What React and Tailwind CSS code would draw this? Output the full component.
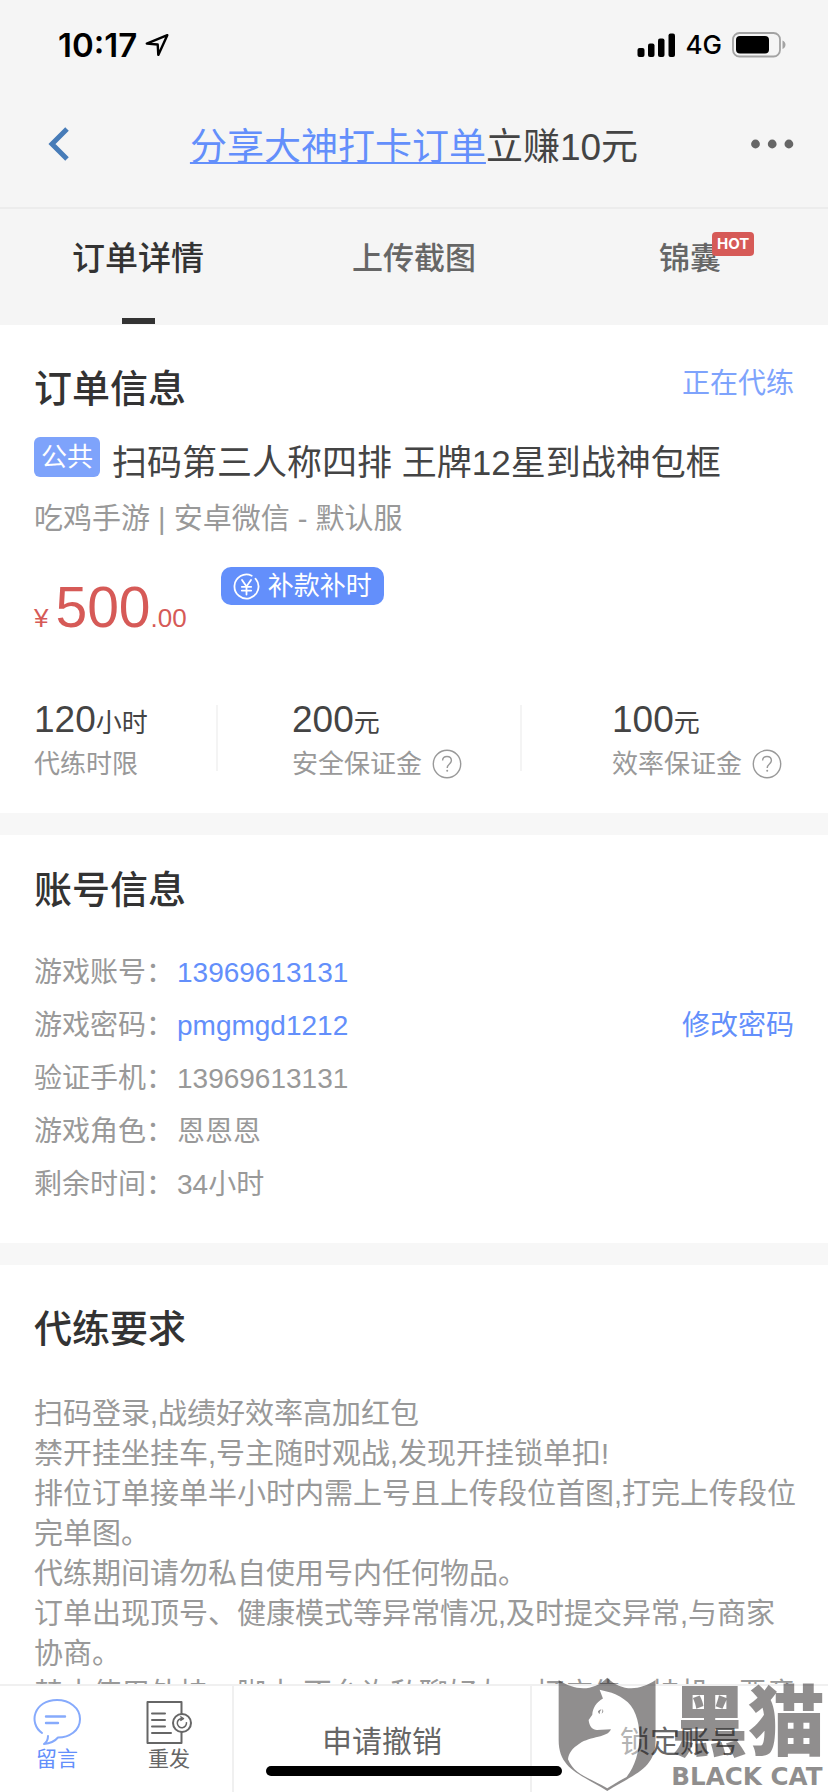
import React from "react";

const stats = [
  { value: "120", unit: "小时", label: "代练时限", help: false },
  { value: "200", unit: "元", label: "安全保证金", help: true },
  { value: "100", unit: "元", label: "效率保证金", help: true },
];

const account = [
  { label: "游戏账号：", value: "13969613131", accent: true },
  { label: "游戏密码：", value: "pmgmgd1212", accent: true, action: "修改密码" },
  { label: "验证手机：", value: "13969613131" },
  { label: "游戏角色：", value: "恩恩恩" },
  { label: "剩余时间：", value: "34小时" },
];

const rules = [
  "扫码登录,战绩好效率高加红包",
  "禁开挂坐挂车,号主随时观战,发现开挂锁单扣!",
  "排位订单接单半小时内需上号且上传段位首图,打完上传段位完单图。",
  "代练期间请勿私自使用号内任何物品。",
  "订单出现顶号、健康模式等异常情况,及时提交异常,与商家协商。",
  "禁止使用外挂、脚本,不允许私聊好友、打广告、挂机、恶意",
];

function StatusBar() {
  return (
    <div className="flex h-[90px] items-center justify-between pl-[58px] pr-[42px] text-black">
      <div className="flex items-center gap-2">
        <span className="font-['Inter',sans-serif] text-[33px] font-semibold leading-10">10:17</span>
        <svg className="h-6 w-6" viewBox="0 0 24 24" fill="none" stroke="currentColor" strokeWidth="2.4" strokeLinejoin="round">
          <path d="M22.3 2.2 1.8 10.6l10.9.9.6 10.4z" />
        </svg>
      </div>
      <div className="flex items-center gap-[10px]">
        <svg className="h-6 w-[39px]" viewBox="0 0 39 24">
          <rect x="0.5" y="15" width="7" height="9" rx="2" />
          <rect x="11" y="10.5" width="6.5" height="13.5" rx="2" />
          <rect x="21" y="5.5" width="6.5" height="18.5" rx="2" />
          <rect x="31.5" y="0.5" width="6.5" height="23.5" rx="2" />
        </svg>
        <span className="font-['Inter',sans-serif] text-[26px] font-medium leading-10">4G</span>
        <svg className="h-[26px] w-[54px]" viewBox="0 0 54 26">
          <rect x="1" y="1" width="47" height="23.5" rx="6.5" fill="none" stroke="#a3a3a3" strokeWidth="1.8" />
          <rect x="4" y="4" width="33" height="17.5" rx="4" />
          <path d="M50.5 8.5c4 1.6 4 7 0 8.5z" fill="#a3a3a3" />
        </svg>
      </div>
    </div>
  );
}

function HelpIcon() {
  return (
    <svg className="h-[30px] w-[30px]" viewBox="0 0 30 30" fill="none" stroke="#999" strokeWidth="1.4">
      <circle cx="15" cy="15" r="13.7" />
      <path d="M10.6 11.6c0-5.4 8.8-5.4 8.8 0 0 3.4-4.2 3.4-4.2 7.4" />
      <circle cx="15.2" cy="21.8" r="1" fill="#999" stroke="none" />
    </svg>
  );
}

function Watermark() {
  return (
    <svg className="pointer-events-none absolute bottom-0 right-0 h-[117px] w-[272px]" viewBox="80 105 817 351" aria-hidden="true">
      <g opacity="0.5">
        <path
          fill="#231f20"
          d="M88 120C138 153 192 155 234 113C276 155 330 153 379 120V300C379 385 320 400 234 453C148 400 88 385 88 300Z"
        />
        <path
          fill="#fff"
          d="M116 358C135 405 180 413 234 445C262 428 275 420 292 411C345 345 344 215 285 178C270 166 250 158 235 155L211 149L221 175C201 186 190 204 189 224L178 240C180 260 190 270 203 270L245 268C235 294 185 288 150 311C130 324 118 338 116 358Z"
        />
        <path fill="#231f20" d="M206 214q7-8 11-5-7 4-5 13-6-2-6-8zM219 207q7 8-2 14 4-6 2-14z" />
        <text x="426" y="331" fontSize="231" fontWeight="900" fill="#231f20" fontFamily="'Noto Sans CJK SC', sans-serif">黑猫</text>
        <text x="426" y="434" fontSize="74" fontWeight="700" fill="#231f20" fontFamily="'DejaVu Sans', sans-serif">BLACK CAT</text>
      </g>
    </svg>
  );
}

export default function App() {
  return (
    <div className="flex h-screen flex-col bg-white font-['Liberation_Sans','Noto_Sans_CJK_SC',sans-serif] text-[#444]">
      <header className="shrink-0 bg-[#f5f5f5]">
        <StatusBar />
        <div className="flex h-[119px] items-center justify-between border-b-2 border-[#ececec] px-[34px] pb-[2px]">
          <button type="button" aria-label="返回" className="flex h-12 w-11 items-center justify-center pb-2">
            <svg className="h-9 w-7" viewBox="0 0 28 36" fill="none" stroke="#477cb8" strokeWidth="5">
              <path d="M25 3 10 18l15 15" />
            </svg>
          </button>
          <h1 className="text-[37px] leading-[50px]">
            <a href="#share" className="text-[#638ffb] underline decoration-2 underline-offset-[2px]">分享大神打卡订单</a>立赚10元
          </h1>
          <button type="button" aria-label="更多" className="flex h-12 w-11 items-center justify-end pb-2">
            <svg className="h-3 w-11" viewBox="0 0 44 12" fill="#666">
              <circle cx="5.5" cy="6" r="4.4" />
              <circle cx="22.2" cy="6" r="4.4" />
              <circle cx="38.9" cy="6" r="4.4" />
            </svg>
          </button>
        </div>
        <nav className="grid h-[116px] grid-cols-3 text-[31px] font-medium leading-10 text-[#666]">
          <button type="button" className="flex flex-col items-center justify-between pt-[30px]">
            <span className="text-[33px] text-[#333]">订单详情</span>
            <span className="mb-px h-[6px] w-[33px] bg-[#333]" />
          </button>
          <button type="button" className="flex justify-center pt-[30px]">上传截图</button>
          <button type="button" className="flex justify-center pt-[30px]">
            <span className="relative">
              锦囊
              <span className="absolute -top-[7px] left-[53px] rounded-[4px] bg-[#d65a57] px-[5px] font-['Inter',sans-serif] text-[15px] font-bold leading-6 text-white">HOT</span>
            </span>
          </button>
        </nav>
      </header>

      <main className="min-h-0 flex-1 overflow-y-auto [scrollbar-width:none]">
        <section className="px-[34px] pb-[42px] pt-[39px]">
          <div className="flex justify-between">
            <h2 className="text-[38px] font-medium leading-[50px] text-[#333]">订单信息</h2>
            <span className="text-[28px] leading-10 text-[#7ea3fc]">正在代练</span>
          </div>
          <div className="mt-[23px] flex gap-3">
            <span className="h-10 rounded-[6px] bg-[#7ea3fb] px-[7px] text-[26px] leading-10 text-white">公共</span>
            <p className="text-[35px] leading-[52px]">扫码第三人称四排 王牌12星到战神包框</p>
          </div>
          <p className="mt-[10px] text-[29px] leading-10 text-[#999]">吃鸡手游 | 安卓微信 - 默认服</p>
          <div className="mt-[28px] flex items-start">
            <p className="flex items-baseline pt-[10px] leading-[60px] text-[#d65a57]">
              <span className="text-[26px]">¥</span>
              <span className="ml-[7px] text-[57px]">500</span>
              <span className="text-[26px]">.00</span>
            </p>
            <button type="button" className="ml-[34px] flex h-[38px] items-center gap-2 rounded-[10px] bg-[#638ffb] px-3 text-[26px] leading-[38px] text-white">
              <svg className="h-[27px] w-[27px]" viewBox="0 0 27 27" fill="none" stroke="currentColor" strokeWidth="1.8" strokeLinecap="round">
                <path d="M18.7 2.7A12 12 0 1 0 23 6.2M22.5 5.8 23.8 7.5" />
                <path d="m9 7 4.5 6.5L18 7M8.8 13.8h9.4M8.8 17.6h9.4M13.5 13.5v8" />
              </svg>
              补款补时
            </button>
          </div>
          <dl className="mt-[57px] grid grid-cols-[184fr_304fr_272fr]">
            {stats.map((s, i) => (
              <div
                key={s.label}
                className={
                  i === 0
                    ? "flex h-[66px] flex-col border-r-2 border-[#f4f4f4]"
                    : i === 1
                      ? "flex h-[66px] flex-col border-r-2 border-[#f4f4f4] pl-[74px]"
                      : "flex h-[66px] flex-col pl-[90px]"
                }
              >
                <dt className="order-2 mt-[14px] flex h-[30px] shrink-0 items-center gap-[10px] whitespace-nowrap text-[26px] leading-[30px] text-[#999]">
                  {s.label}
                  {s.help && (
                    <button type="button" aria-label={s.label + "说明"}>
                      <HelpIcon />
                    </button>
                  )}
                </dt>
                <dd className="order-1 h-[30px] shrink-0 text-[26px] leading-[30px]">
                  <span className="text-[37px]">{s.value}</span>
                  {s.unit}
                </dd>
              </div>
            ))}
          </dl>
        </section>

        <section className="border-t-[22px] border-[#f7f7f7] px-[34px] pb-8 pt-[30px]">
          <h2 className="text-[38px] font-medium leading-[50px] text-[#333]">账号信息</h2>
          <dl className="mt-[31px] text-[28px] leading-[53px] text-[#999]">
            {account.map((row) => (
              <div key={row.label} className="flex">
                <dt className="w-[143px] whitespace-nowrap">{row.label}</dt>
                <dd className={row.accent ? "text-[#638ffb]" : ""}>{row.value}</dd>
                {row.action && (
                  <dd className="ml-auto text-[#638ffb]">
                    <button type="button">{row.action}</button>
                  </dd>
                )}
              </div>
            ))}
          </dl>
        </section>

        <section className="border-t-[22px] border-[#f7f7f7] pb-8 pl-[34px] pr-7 pt-[39px]">
          <h2 className="text-[38px] font-medium leading-[50px] text-[#333]">代练要求</h2>
          <div className="mt-[40px] text-[29px] leading-10 text-[#999]">
            {rules.map((r) => (
              <p key={r}>{r}</p>
            ))}
          </div>
        </section>
      </main>

      <footer className="relative grid h-[108px] shrink-0 grid-cols-[234fr_298fr_296fr] border-t-2 border-[#f0f0f0] bg-white text-[30px] text-[#666]">
        <div className="flex justify-between border-r-2 border-[#f0f0f0] pl-[33px] pr-[40px] pt-[13px] text-[21px] leading-7">
          <button type="button" className="flex flex-col items-center self-start text-[#638ffb]">
            <svg className="h-[46px] w-12" viewBox="0 0 48 46" fill="none" stroke="#86aafc" strokeWidth="2" strokeLinecap="round" strokeLinejoin="round">
              <path d="M9 34C-5 24 1 1 24 1C36 1 47 8.5 47 20C47 32 36 38.5 25 38.5C22 42 17 44.5 11 45C14 43 15 40 15 37" />
              <path d="M13 17.5h19M13 24h12" strokeWidth="2.4" />
            </svg>
            留言
          </button>
          <button type="button" className="flex flex-col items-center self-start">
            <svg className="h-[46px] w-[46px]" viewBox="0 0 46 46" fill="none" stroke="#666" strokeWidth="2" strokeLinejoin="round">
              <path d="M35.5 15V3H1.5v41h34V33" />
              <path d="M6 14.5h13M6 21h13M6 27.5h13M6 34h19" strokeLinecap="round" />
              <circle cx="36" cy="24" r="9" />
              <path d="M36 19.5a4.6 4.6 0 1 0 4.4 3.7M34.3 17.500l3.2 2.200-3.200 2" strokeWidth="1.5" />
            </svg>
            重发
          </button>
        </div>
        <button type="button" className="flex justify-center border-r-2 border-[#f0f0f0] pt-[36px] leading-10">申请撤销</button>
        <button type="button" className="flex justify-center pt-[36px] leading-10">锁定账号</button>
        <div className="absolute bottom-4 left-1/2 h-[10px] w-[296px] -translate-x-1/2 rounded-full bg-black" />
        <Watermark />
      </footer>
    </div>
  );
}
